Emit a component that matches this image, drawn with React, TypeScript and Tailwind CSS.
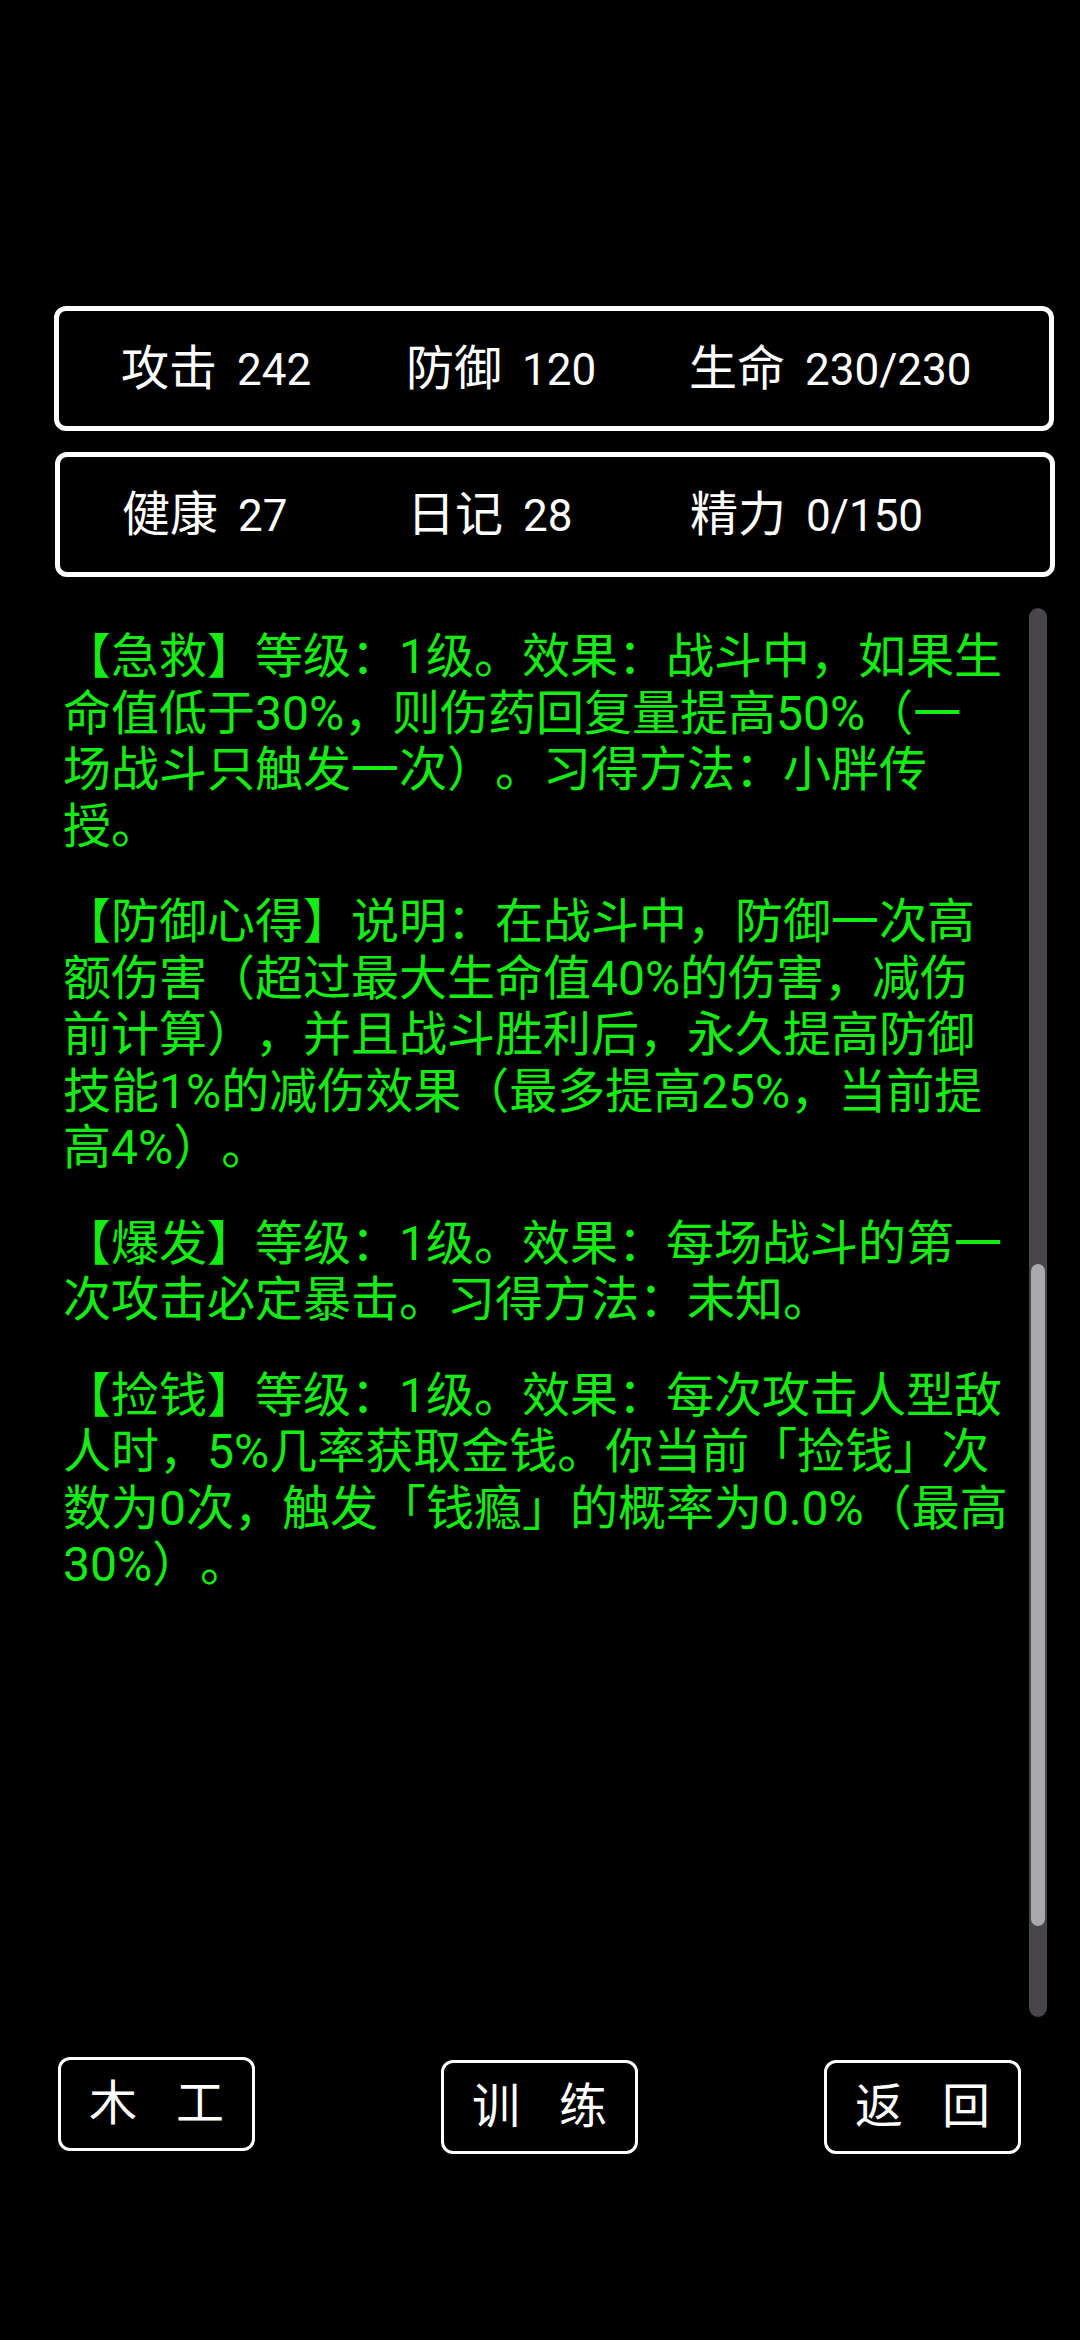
import React from 'react';

type Stat = { label: string; value: string };

const topStats: Stat[] = [
  { label: '攻击', value: '242' },
  { label: '防御', value: '120' },
  { label: '生命', value: '230/230' },
];

const bottomStats: Stat[] = [
  { label: '健康', value: '27' },
  { label: '日记', value: '28' },
  { label: '精力', value: '0/150' },
];

// each skill is kept as the lines the game wraps it into
const skills: string[][] = [
  [
    '【急救】等级：1级。效果：战斗中，如果生',
    '命值低于30%，则伤药回复量提高50%（一',
    '场战斗只触发一次）。习得方法：小胖传',
    '授。',
  ],
  [
    '【防御心得】说明：在战斗中，防御一次高',
    '额伤害（超过最大生命值40%的伤害，减伤',
    '前计算），并且战斗胜利后，永久提高防御',
    '技能1%的减伤效果（最多提高25%，当前提',
    '高4%）。',
  ],
  ['【爆发】等级：1级。效果：每场战斗的第一', '次攻击必定暴击。习得方法：未知。'],
  [
    '【捡钱】等级：1级。效果：每次攻击人型敌',
    '人时，5%几率获取金钱。你当前「捡钱」次',
    '数为0次，触发「钱瘾」的概率为0.0%（最高',
    '30%）。',
  ],
];

const StatBox = ({ stats, className }: { stats: Stat[]; className: string }) => (
  <div
    className={`h-[125px] w-[1000px] rounded-[12px] border-[5px] border-white grid grid-cols-[285px_283px_1fr] items-center pl-[62px] text-white text-[48px] leading-none ${className}`}
  >
    {stats.map((s) => (
      <div key={s.label} className="flex items-baseline whitespace-nowrap">
        <span>{s.label}</span>
        <span className="ml-[20px] text-[44px]">{s.value}</span>
      </div>
    ))}
  </div>
);

const GameButton = ({ chars, className = '' }: { chars: [string, string]; className?: string }) => (
  <button
    className={`w-[197px] h-[94px] rounded-[12px] border-[3px] border-white flex items-center justify-center gap-[39px] text-white text-[48px] leading-none ${className}`}
  >
    <span>{chars[0]}</span>
    <span>{chars[1]}</span>
  </button>
);

export default function App() {
  return (
    <div className="w-[1080px] min-h-[2340px] bg-black font-['Roboto','Noto_Sans_CJK_SC',sans-serif] [text-spacing-trim:space-all] pt-[306px]">
      <StatBox stats={topStats} className="ml-[54px]" />
      <StatBox stats={bottomStats} className="ml-[55px] mt-[21px]" />

      <div className="flex mt-[31px] h-[1409px]">
        <div className="w-[1029px] pl-[63px] pt-[21px] text-[#14ec14] text-[48px] leading-[56.5px] whitespace-nowrap">
          {skills.map((lines, i) => (
            <p key={i} className="mb-[39px]">
              {lines.map((line, j) => (
                <React.Fragment key={j}>
                  {line}
                  {j < lines.length - 1 && <br />}
                </React.Fragment>
              ))}
            </p>
          ))}
        </div>
        {/* scrollbar */}
        <div className="w-[18px] h-full rounded-full bg-[#48464a] pt-[656px]">
          <div className="mx-auto w-[14px] h-[662px] rounded-full bg-[#a9a9ae]" />
        </div>
      </div>

      <div className="flex justify-between items-start w-[963px] ml-[58px] mt-[40px]">
        <GameButton chars={['木', '工']} />
        <GameButton chars={['训', '练']} className="mt-[3px]" />
        <GameButton chars={['返', '回']} className="mt-[3px]" />
      </div>
    </div>
  );
}
